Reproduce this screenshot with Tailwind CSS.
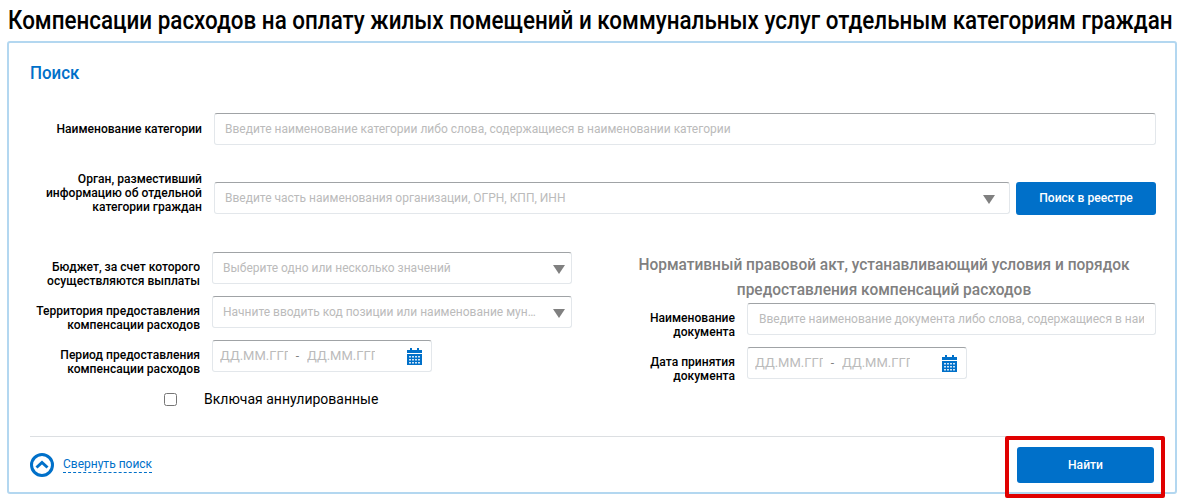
<!DOCTYPE html>
<html lang="ru">
<head>
    <meta charset="UTF-8">
    <title>Компенсации расходов</title>
    <script src="https://cdn.jsdelivr.net/npm/@tailwindcss/browser@4"></script>
</head>
<body class="bg-white font-['Roboto',sans-serif] text-black w-[1182px] h-[502px] overflow-hidden">
    <h1 class="h-[41px] ml-[8px] w-[1166px] text-[26px] leading-[40px] font-medium whitespace-nowrap origin-left scale-x-[.862]">Компенсации расходов на оплату жилых помещений и коммунальных услуг отдельным категориям граждан</h1>

    <div class="ml-[7px] w-[1170px] h-[453px] border-2 border-[#b3d7f0] rounded-[3px] pl-[21px] pr-[18px] flex flex-col">
        <h2 class="mt-[19px] h-[22px] text-[19px] leading-[22px] font-medium text-[#0070c9] w-max origin-left scale-x-[.89]">Поиск</h2>

        <!-- категория -->
        <div class="mt-[29px] flex items-center h-[32px]">
            <label class="w-[172px] text-right text-[13px] leading-[14px] font-medium whitespace-nowrap origin-right scale-x-[.93]">Наименование категории</label>
            <input class="ml-[12px] w-[942px] h-[32px] px-[10px] text-[12px] border border-[#e3e7eb] border-t-[#a0a3a6] rounded-[3px] placeholder:text-[#bbbbbb]" placeholder="Введите наименование категории либо слова, содержащиеся в наименовании категории">
        </div>

        <!-- орган -->
        <div class="mt-[37px] flex items-center h-[32px]">
            <label class="w-[172px] -mt-[10px] text-right text-[13px] leading-[14px] font-medium whitespace-nowrap origin-right scale-x-[.93]">Орган, разместивший<br>информацию об отдельной<br>категории граждан</label>
            <div class="relative ml-[12px] w-[796px]">
                <input class="w-full h-[32px] px-[10px] text-[12px] border border-[#e3e7eb] border-t-[#a0a3a6] rounded-[3px] placeholder:text-[#bbbbbb]" placeholder="Введите часть наименования организации, ОГРН, КПП, ИНН">
                <span class="absolute right-[15px] top-[13px] w-0 h-0 border-x-[6px] border-x-transparent border-t-[9px] border-t-[#808080]"></span>
            </div>
            <button class="ml-[6px] w-[140px] h-[33px] bg-[#0070c9] rounded-[3px] text-white text-[13px] font-medium"><span class="block scale-x-[.93]">Поиск в реестре</span></button>
        </div>

        <div class="mt-[38px] flex h-[165px]">
            <!-- левая колонка -->
            <div class="w-[542px] flex flex-col gap-[12px]">
                <div class="flex items-center h-[32px]">
                    <label class="w-[190px] -ml-[20px] mt-[12px] text-right text-[13px] leading-[14px] font-medium whitespace-nowrap origin-right scale-x-[.93]">Бюджет, за счет которого<br>осуществляются выплаты</label>
                    <div class="relative ml-[12px] w-[360px]">
                        <input class="w-full h-[32px] px-[10px] text-[12px] border border-[#e3e7eb] border-t-[#a0a3a6] rounded-[3px] placeholder:text-[#bbbbbb]" placeholder="Выберите одно или несколько значений">
                        <span class="absolute right-[7px] top-[13px] w-0 h-0 border-x-[6px] border-x-transparent border-t-[9px] border-t-[#808080]"></span>
                    </div>
                </div>
                <div class="flex items-center h-[32px]">
                    <label class="w-[190px] -ml-[20px] mt-[12px] text-right text-[13px] leading-[14px] font-medium whitespace-nowrap origin-right scale-x-[.93]">Территория предоставления<br>компенсации расходов</label>
                    <div class="relative ml-[12px] w-[360px]">
                        <input class="w-full h-[32px] pl-[10px] pr-[34px] text-[12px] border border-[#e3e7eb] border-t-[#a0a3a6] rounded-[3px] text-ellipsis placeholder:text-[#bbbbbb]" placeholder="Начните вводить код позиции или наименование муниципального образования">
                        <span class="absolute right-[7px] top-[13px] w-0 h-0 border-x-[6px] border-x-transparent border-t-[9px] border-t-[#808080]"></span>
                    </div>
                </div>
                <div class="flex items-center h-[32px]">
                    <label class="w-[190px] -ml-[20px] mt-[12px] text-right text-[13px] leading-[14px] font-medium whitespace-nowrap origin-right scale-x-[.93]">Период предоставления<br>компенсации расходов</label>
                    <div class="ml-[12px] w-[220px] h-[32px] pl-[7px] flex items-center border border-[#e3e7eb] border-t-[#a0a3a6] rounded-[3px]">
                        <input class="w-[68px] text-[13px] placeholder:text-[#bbbbbb]" placeholder="ДД.ММ.ГГГГ">
                        <span class="w-[19px] text-center text-[12px] text-[#808080]">-</span>
                        <input class="w-[68px] text-[13px] placeholder:text-[#bbbbbb]" placeholder="ДД.ММ.ГГГГ">
                        <svg class="ml-[32px]" width="15" height="17" viewBox="0 0 15 17"><rect x="3" y="0" width="2" height="3" fill="#0070c9"/><rect x="10" y="0" width="2" height="3" fill="#0070c9"/><rect x="0" y="2" width="15" height="3" fill="#0070c9"/><rect x="0" y="6" width="15" height="11" fill="#0070c9"/><path d="M2 8h2v1.5H2zM5 8h2v1.5H5zM8 8h2v1.5H8zM11 8h2v1.5h-2zM2 11h2v1.5H2zM5 11h2v1.5H5zM8 11h2v1.5H8zM11 11h2v1.5h-2zM2 14h2v1.5H2zM5 14h2v1.5H5zM8 14h2v1.5H8zM11 14h2v1.5h-2z" fill="#cfe4f6"/></svg>
                    </div>
                </div>
                <div class="flex items-center mt-[6px] pl-[134px]">
                    <input type="checkbox" class="w-[13px] h-[13px]">
                    <span class="ml-[27px] text-[14px] leading-[18px]">Включая аннулированные</span>
                </div>
            </div>

            <!-- правая колонка -->
            <div class="w-[584px]">
                <div class="pl-[40px] text-center text-[16px] leading-[25px] font-medium text-[#808080]"><div class="scale-x-[.968] whitespace-nowrap">Нормативный правовой акт, устанавливающий условия и порядок<br>предоставления компенсаций расходов</div></div>
                <div class="mt-[1px] flex items-center h-[32px]">
                    <label class="w-[163px] mt-[12px] text-right text-[13px] leading-[14px] font-medium whitespace-nowrap origin-right scale-x-[.93]">Наименование<br>документа</label>
                    <input class="ml-[12px] w-[409px] h-[32px] px-[11px] text-[12px] border border-[#e3e7eb] border-t-[#a0a3a6] rounded-[3px] placeholder:text-[#bbbbbb]" placeholder="Введите наименование документа либо слова, содержащиеся в наименовании документа">
                </div>
                <div class="mt-[12px] flex items-center h-[32px]">
                    <label class="w-[163px] mt-[12px] text-right text-[13px] leading-[14px] font-medium whitespace-nowrap origin-right scale-x-[.93]">Дата принятия<br>документа</label>
                    <div class="ml-[12px] w-[220px] h-[32px] pl-[7px] flex items-center border border-[#e3e7eb] border-t-[#a0a3a6] rounded-[3px]">
                        <input class="w-[68px] text-[13px] placeholder:text-[#bbbbbb]" placeholder="ДД.ММ.ГГГГ">
                        <span class="w-[19px] text-center text-[12px] text-[#808080]">-</span>
                        <input class="w-[68px] text-[13px] placeholder:text-[#bbbbbb]" placeholder="ДД.ММ.ГГГГ">
                        <svg class="ml-[32px]" width="15" height="17" viewBox="0 0 15 17"><rect x="3" y="0" width="2" height="3" fill="#0070c9"/><rect x="10" y="0" width="2" height="3" fill="#0070c9"/><rect x="0" y="2" width="15" height="3" fill="#0070c9"/><rect x="0" y="6" width="15" height="11" fill="#0070c9"/><path d="M2 8h2v1.5H2zM5 8h2v1.5H5zM8 8h2v1.5H8zM11 8h2v1.5h-2zM2 11h2v1.5H2zM5 11h2v1.5H5zM8 11h2v1.5H8zM11 11h2v1.5h-2zM2 14h2v1.5H2zM5 14h2v1.5H5zM8 14h2v1.5H8zM11 14h2v1.5h-2z" fill="#cfe4f6"/></svg>
                    </div>
                </div>
            </div>
        </div>

        <!-- низ карточки -->
        <div class="mt-[19px] border-t border-[#dcdfe2] flex items-center justify-between h-[56px] w-[1126px]">
            <div class="flex items-center">
                <svg width="24" height="24" viewBox="0 0 24 24" fill="none"><circle cx="12" cy="12" r="10.5" stroke="#0070c9" stroke-width="3"/><path d="M6.5 14.5L12 9.5l5.5 5" stroke="#0070c9" stroke-width="3"/></svg>
                <a class="ml-[9px] text-[12px] leading-[16px] text-[#0070c9] border-b border-dashed border-[#0070c9]">Свернуть поиск</a>
            </div>
            <div class="relative mr-[2px]">
                <button class="block w-[137px] h-[36px] bg-[#0070c9] rounded-[3px] text-white text-[13px] font-medium"><span class="block scale-x-[.93]">Найти</span></button>
                <div class="absolute -left-[12px] -right-[11px] -top-[11px] -bottom-[15px] border-4 border-[#e00000] rounded-[2px]"></div>
            </div>
        </div>
    </div>
</body>
</html>
